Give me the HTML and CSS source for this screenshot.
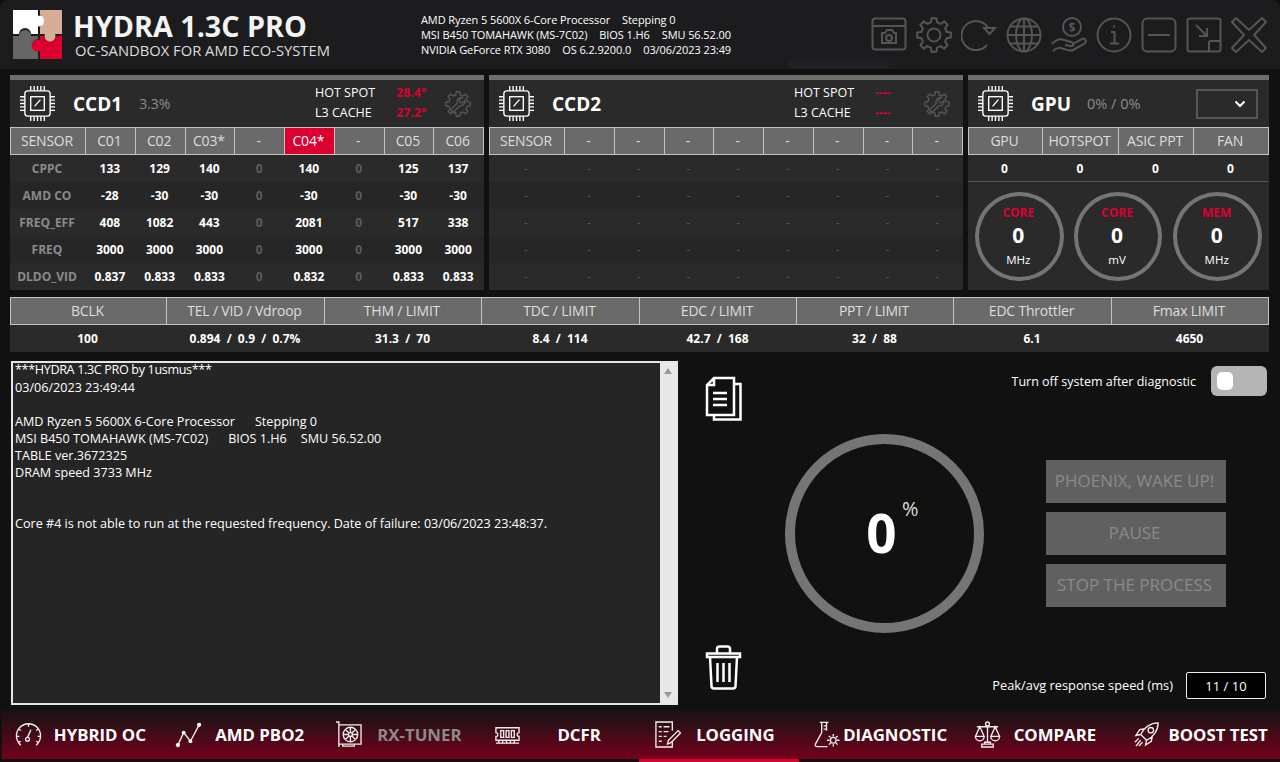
FILE: index.html
```html
<!DOCTYPE html>
<html lang="en">
<head>
  <meta charset="UTF-8">
  <meta name="viewport" content="width=device-width, initial-scale=1">
  <title>Hydra 1.3C Pro</title>
  <link rel="stylesheet" href="styles.css">
</head>
<body>

  <svg class="defs" width="0" height="0" aria-hidden="true">
    <symbol id="chip" viewBox="0 0 36 36">
      <path d="M11 0v5M14.500 0v5M18 0v5M21.500 0v5M25 0v5M11 31v5M14.500 31v5M18 31v5M21.500 31v5M25 31v5M0 11h5M0 14.500h5M0 18h5M0 21.500h5M0 25h5M31 11h5M31 14.500h5M31 18h5M31 21.500h5M31 25h5"/>
      <rect x="5" y="5" width="26" height="26" rx="3"/>
      <rect x="11" y="11" width="14" height="14"/>
      <path d="M15 21l6-7"/>
    </symbol>
    <symbol id="gear" viewBox="0 0 36 36">
      <polygon points="14.85,5.39 15.63,1.17 20.37,1.17 21.15,5.39 24.7,6.86 28.23,4.42 31.58,7.77 29.14,11.3 30.61,14.85 34.83,15.63 34.83,20.37 30.61,21.15 29.14,24.7 31.58,28.23 28.23,31.58 24.7,29.14 21.15,30.61 20.37,34.83 15.63,34.83 14.85,30.61 11.3,29.14 7.77,31.58 4.42,28.23 6.86,24.7 5.39,21.15 1.17,20.37 1.17,15.63 5.39,14.85 6.86,11.3 4.42,7.77 7.77,4.42 11.3,6.86"/>
    </symbol>
    <symbol id="tool" viewBox="0 0 36 36">
      <use href="#gear"/>
      <path d="M24 9a6 6 0 0 0-7 8L9 25a2.500 2.500 0 0 0 3.500 3.500l8-8a6 6 0 0 0 7-7l-4 3-3-1-1-3z"/>
    </symbol>
  </svg>

  <div class="app">

    <header class="top">
      <svg class="logo" width="49" height="49" viewBox="0 0 49 49">
        <path fill="#fff" d="M0 0H25V6A5.500 5.500 0 1 1 25 16V24H18A6 6 0 0 0 6 24H0Z"/>
        <path fill="#d8ad96" d="M27 0H49V24H42A5.500 5.500 0 1 1 32 24H27V17A6.500 6.500 0 0 0 27 5Z"/>
        <path fill="#666" d="M0 26H6A6 6 0 1 1 18 26H25V29A6 6 0 0 0 25 41V49H0Z"/>
        <path fill="#dc0030" d="M27 26H31A6 6 0 0 0 43 26H49V49H27V41A6 6 0 1 1 27 30Z"/>
      </svg>
      <div class="brand">
        <div class="brand-name">HYDRA 1.3C PRO</div>
        <div class="brand-sub">OC-SANDBOX FOR AMD ECO-SYSTEM</div>
      </div>
      <div class="sysinfo">
        <div>AMD Ryzen 5 5600X 6-Core Processor<span>Stepping 0</span></div>
        <div>MSI B450 TOMAHAWK (MS-7C02)<span>BIOS 1.H6</span><span>SMU 56.52.00</span></div>
        <div>NVIDIA GeForce RTX 3080<span>OS 6.2.9200.0</span><span>03/06/2023 23:49</span></div>
      </div>
      <div class="toolbar">
        <svg viewBox="0 0 36 36"><rect x="1.500" y="1.500" width="33" height="31" rx="3"/><path d="M1.500 9h33"/><path d="M11 16h3l2-3h5l2 3h2v10H11z"/><circle cx="18" cy="21" r="3"/></svg>
        <svg viewBox="0 0 36 36"><use href="#gear"/><circle cx="18" cy="18" r="6.500"/></svg>
        <svg viewBox="0 0 36 36"><path d="M27 10.500A14.500 14.500 0 1 0 26 28"/><path d="M23 11h11l-5.500 6z"/></svg>
        <svg viewBox="0 0 36 36"><circle cx="18" cy="18" r="16.500"/><ellipse cx="18" cy="18" rx="8" ry="16.500"/><path d="M18 1.500v33M1.500 18h33M4 9.500h28M4 26.500h28"/></svg>
        <svg viewBox="0 0 36 36"><circle cx="21" cy="10" r="9"/><text class="dollar" x="21" y="14.500">$</text><path d="M1 27c4-4 8-6 12-4l7 2c3 1 3 4 0 4l-6-1M22 27l9-5c4-2 5 3 2 5l-11 6c-4 2-8-1-12-2-3-1-6 1-8 3"/></svg>
        <svg viewBox="0 0 36 36"><circle cx="18" cy="18" r="16.500"/><path d="M15 15h3.500v11M14 26.500h9M17 9.500h2"/></svg>
        <svg viewBox="0 0 36 36"><rect x="1.500" y="1.500" width="33" height="33" rx="5"/><path d="M7 18h22"/></svg>
        <svg viewBox="0 0 36 36"><rect x="1.500" y="1.500" width="33" height="33" rx="2"/><path d="M10 8l11 11M21 11v8h-8M23 24h11M23 24v10"/></svg>
        <svg viewBox="0 0 36 36"><polygon points="5,1 18,13 31,1 35,5 23,18 35,31 31,35 18,23 5,35 1,31 13,18 1,5"/></svg>
      </div>
      <div class="ghost-btn"></div>
    </header>

    <section class="panels">

      <div class="panel">
        <div class="panel-head">
          <svg class="chip"><use href="#chip"/></svg>
          <div class="panel-name">CCD1</div>
          <div class="panel-load">3.3%</div>
          <div class="temps">
            <div>HOT SPOT</div><b class="hot">28.4°</b>
            <div>L3 CACHE</div><b class="hot">27.2°</b>
          </div>
          <svg class="tool"><use href="#tool"/></svg>
        </div>
        <div class="sheet">
          <div class="th">SENSOR</div><div class="th">C01</div><div class="th">C02</div><div class="th">C03*</div><div class="th">-</div><div class="th active">C04*</div><div class="th">-</div><div class="th">C05</div><div class="th">C06</div>
          <div class="td label">CPPC</div><div class="td">133</div><div class="td">129</div><div class="td">140</div><div class="td off">0</div><div class="td">140</div><div class="td off">0</div><div class="td">125</div><div class="td">137</div>
          <div class="td alt label">AMD CO</div><div class="td alt">-28</div><div class="td alt">-30</div><div class="td alt">-30</div><div class="td alt off">0</div><div class="td alt">-30</div><div class="td alt off">0</div><div class="td alt">-30</div><div class="td alt">-30</div>
          <div class="td label">FREQ_EFF</div><div class="td">408</div><div class="td">1082</div><div class="td">443</div><div class="td off">0</div><div class="td">2081</div><div class="td off">0</div><div class="td">517</div><div class="td">338</div>
          <div class="td alt label">FREQ</div><div class="td alt">3000</div><div class="td alt">3000</div><div class="td alt">3000</div><div class="td alt off">0</div><div class="td alt">3000</div><div class="td alt off">0</div><div class="td alt">3000</div><div class="td alt">3000</div>
          <div class="td label">DLDO_VID</div><div class="td">0.837</div><div class="td">0.833</div><div class="td">0.833</div><div class="td off">0</div><div class="td">0.832</div><div class="td off">0</div><div class="td">0.833</div><div class="td">0.833</div>
        </div>
      </div>

      <div class="panel">
        <div class="panel-head">
          <svg class="chip"><use href="#chip"/></svg>
          <div class="panel-name">CCD2</div>
          <div class="panel-load"></div>
          <div class="temps">
            <div>HOT SPOT</div><b class="hot">----</b>
            <div>L3 CACHE</div><b class="hot">----</b>
          </div>
          <svg class="tool"><use href="#tool"/></svg>
        </div>
        <div class="sheet">
          <div class="th">SENSOR</div><div class="th">-</div><div class="th">-</div><div class="th">-</div><div class="th">-</div><div class="th">-</div><div class="th">-</div><div class="th">-</div><div class="th">-</div>
          <div class="td blank">-</div><div class="td blank">-</div><div class="td blank">-</div><div class="td blank">-</div><div class="td blank">-</div><div class="td blank">-</div><div class="td blank">-</div><div class="td blank">-</div><div class="td blank">-</div>
          <div class="td alt blank">-</div><div class="td alt blank">-</div><div class="td alt blank">-</div><div class="td alt blank">-</div><div class="td alt blank">-</div><div class="td alt blank">-</div><div class="td alt blank">-</div><div class="td alt blank">-</div><div class="td alt blank">-</div>
          <div class="td blank">-</div><div class="td blank">-</div><div class="td blank">-</div><div class="td blank">-</div><div class="td blank">-</div><div class="td blank">-</div><div class="td blank">-</div><div class="td blank">-</div><div class="td blank">-</div>
          <div class="td alt blank">-</div><div class="td alt blank">-</div><div class="td alt blank">-</div><div class="td alt blank">-</div><div class="td alt blank">-</div><div class="td alt blank">-</div><div class="td alt blank">-</div><div class="td alt blank">-</div><div class="td alt blank">-</div>
          <div class="td blank">-</div><div class="td blank">-</div><div class="td blank">-</div><div class="td blank">-</div><div class="td blank">-</div><div class="td blank">-</div><div class="td blank">-</div><div class="td blank">-</div><div class="td blank">-</div>
        </div>
      </div>

      <div class="panel">
        <div class="panel-head">
          <svg class="chip"><use href="#chip"/></svg>
          <div class="panel-name">GPU</div>
          <div class="panel-load gpu-load">0% / 0%</div>
          <div class="gpu-select">
            <svg width="12" height="8" viewBox="0 0 12 8"><path d="M1.500 1.500L6 6l4.500-4.500"/></svg>
          </div>
        </div>
        <div class="sheet gpu-sheet">
          <div class="th">GPU</div><div class="th">HOTSPOT</div><div class="th">ASIC PPT</div><div class="th">FAN</div>
          <div class="td line">0</div><div class="td line">0</div><div class="td line">0</div><div class="td line">0</div>
        </div>
        <div class="rings">
          <div class="ring"><b>CORE</b><strong>0</strong><span>MHz</span></div>
          <div class="ring"><b>CORE</b><strong>0</strong><span>mV</span></div>
          <div class="ring"><b>MEM</b><strong>0</strong><span>MHz</span></div>
        </div>
      </div>

    </section>

    <section class="stats">
      <div class="th">BCLK</div><div class="th">TEL / VID / Vdroop</div><div class="th">THM / LIMIT</div><div class="th">TDC / LIMIT</div><div class="th">EDC / LIMIT</div><div class="th">PPT / LIMIT</div><div class="th">EDC Throttler</div><div class="th">Fmax LIMIT</div>
      <div class="td">100</div><div class="td">0.894 &nbsp;/&nbsp; 0.9 &nbsp;/&nbsp; 0.7%</div><div class="td">31.3 &nbsp;/&nbsp; 70</div><div class="td">8.4 &nbsp;/&nbsp; 114</div><div class="td">42.7 &nbsp;/&nbsp; 168</div><div class="td">32 &nbsp;/&nbsp; 88</div><div class="td">6.1</div><div class="td">4650</div>
    </section>

    <section class="work">
      <div class="log">
        <div class="log-text">
          <div class="log-title">***HYDRA 1.3C PRO by 1usmus***</div>
          <div>03/06/2023 23:49:44</div>
          <br>
          <div>AMD Ryzen 5 5600X 6-Core Processor<span>Stepping 0</span></div>
          <div>MSI B450 TOMAHAWK (MS-7C02)<span>BIOS 1.H6</span><span>SMU 56.52.00</span></div>
          <div>TABLE ver.3672325</div>
          <div>DRAM speed 3733 MHz</div>
          <br>
          <br>
          <div>Core #4 is not able to run at the requested frequency. Date of failure: 03/06/2023 23:48:37.</div>
        </div>
        <div class="scrollbar">
          <i class="arrow-up"></i>
          <i class="arrow-down"></i>
        </div>
      </div>

      <div class="tools">
        <svg width="37" height="45" viewBox="0 0 37 45"><path d="M9 2h20v37H2V9zM9 2v7H2M8 17h14M8 23h14M8 29h14"/><path d="M29 8h6.500v35.500H9V39"/></svg>
        <svg width="37" height="45" viewBox="0 0 37 45"><path d="M2 12V8.500h33V12zM12 8V4a2.500 2.500 0 0 1 2.500-2.500h8A2.500 2.500 0 0 1 25 4v4M5 12l1.500 29a2.500 2.500 0 0 0 2.500 2.500h19a2.500 2.500 0 0 0 2.500-2.500L32 12M12.500 18v19M18.500 18v19M24.500 18v19"/></svg>
      </div>

      <div class="dial">
        <strong>0</strong><span>%</span>
      </div>

      <div class="controls">
        <div class="control-row">
          <span>Turn off system after diagnostic</span>
          <div class="toggle"><i></i></div>
        </div>
        <div class="buttons">
          <button>PHOENIX, WAKE UP!</button>
          <button>PAUSE</button>
          <button>STOP THE PROCESS</button>
        </div>
        <div class="control-row speed-row">
          <span>Peak/avg response speed (ms)</span>
          <div class="speed">11 / 10</div>
        </div>
      </div>
    </section>

    <nav class="nav">
      <a class="nav-item">
        <svg viewBox="0 0 28 28"><path d="M6 25A12.500 12.500 0 1 1 22 25M14 3v3M4 8l2 2M24 8l-2 2M1.500 16h3M26.500 16h-3M4 22l2-1M24 22l-2-1M16.500 9L13 17"/><circle cx="13" cy="19" r="2"/></svg>
        <span>HYBRID OC</span>
      </a>
      <a class="nav-item">
        <svg viewBox="0 0 28 28"><path d="M3 25L9 12l7 9L25 4"/><circle class="dot" cx="3" cy="25" r="2.200"/><circle class="dot" cx="9" cy="12" r="2"/><circle class="dot" cx="16" cy="21" r="2"/><circle class="dot" cx="25" cy="4" r="2.200"/></svg>
        <span>AMD PBO2</span>
      </a>
      <a class="nav-item dim">
        <svg viewBox="0 0 28 28"><path d="M1 1h3v26M4 4h23v20H4M8 24v2h12v-2"/><circle cx="16" cy="14" r="7.500"/><circle cx="16" cy="14" r="2"/><path d="M16 7v5M16 16v5M9 14h5M18 14h5M11 9l3.500 3.500M17.500 15.500L21 19M21 9l-3.500 3.500M14.500 15.500L11 19"/></svg>
        <span>RX-TUNER</span>
      </a>
      <a class="nav-item">
        <svg viewBox="0 0 28 28"><path d="M2 7h24v5a2 2 0 0 0 0 4v4H2v-4a2 2 0 0 0 0-4zM2 23h24"/><path d="M7 10v7h3v-7zM12.500 10v7h3v-7zM18 10v7h3v-7zM5 20v3M9 20v3M13 20v3M17 20v3M21 20v3"/></svg>
        <span>DCFR</span>
      </a>
      <a class="nav-item current shifted">
        <svg viewBox="0 0 28 28"><path d="M19 10V1H2v26h17v-6M5 6h3M5 11h3M5 16h3M5 21h3M10 6h6M10 11h5M10 16h3"/><path d="M14 24l1-4 10-10 2.500 2.500-10 10z"/></svg>
        <span>LOGGING</span>
      </a>
      <a class="nav-item shifted">
        <svg viewBox="0 0 28 28"><path d="M6 1.500h9M8 2v10L1.500 24c-.5 1.500 0 2.500 2 2.500H14M13 2v8M10 5h3M10 8.500h3"/><circle cx="20" cy="20" r="3"/><path d="M20 13.500v2.500M20 24v2.500M13.500 20h2.500M24 20h2.500M15.500 15.500l1.700 1.700M22.800 22.800l1.700 1.700M24.500 15.500l-1.700 1.700M17.200 22.800l-1.700 1.700"/></svg>
        <span>DIAGNOSTIC</span>
      </a>
      <a class="nav-item shifted">
        <svg viewBox="0 0 28 28"><circle cx="14" cy="3" r="2"/><path d="M14 5v17M3 6h22M6 6L1.500 16h9zM22 6l-4.500 10h9zM1.500 16a4.500 4.500 0 0 0 9 0M17.500 16a4.500 4.500 0 0 0 9 0M11 22h6v2h-6zM8 24h12v3H8z"/></svg>
        <span>COMPARE</span>
      </a>
      <a class="nav-item">
        <svg viewBox="0 0 28 28"><path d="M8 14C11 7 18 2 26 2c0 8-5 15-12 18zM8 14l-5 1 4-6 5-1M14 20l-1 5 6-4 1-5"/><circle cx="18.500" cy="9.500" r="2.800"/><path d="M6 18l-4 4M8 20l-5 6M10 22l-4 4"/></svg>
        <span>BOOST TEST</span>
      </a>
    </nav>

  </div>

</body>
</html>
```

FILE: styles.css
```css
* {
  box-sizing: border-box;
}

body {
  margin: 0;
  background: #111;
  color: #fff;
  font-family: "Open Sans", "Noto Sans", sans-serif;
  font-stretch: 90%;
}

.defs {
  display: block;
  height: 0;
}

.app {
  width: 1280px;
  height: 762px;
  display: flex;
  flex-direction: column;
  overflow: hidden;
  background: #111;
}

/* Header */
.top {
  height: 69px;
  flex: none;
  display: flex;
  align-items: center;
  position: relative;
  padding: 0 13px;
  border-radius: 8px 8px 0 0;
  background: #1c1c1e;
}

.ghost-btn {
  position: absolute;
  left: 788px;
  top: 60px;
  width: 101px;
  height: 9px;
  background: #1d2126;
}

.logo {
  flex: none;
}

.brand {
  width: 348px;
  margin-left: 11px;
  flex: none;
}

.brand-name {
  font-size: 28.700px;
  font-weight: 700;
  line-height: 31px;
  color: #f4f4f4;
}

.brand-sub {
  margin-left: 2px;
  font-size: 14.750px;
  line-height: 18px;
  color: #ddd;
}

.sysinfo {
  font-size: 11px;
  letter-spacing: -0.09px;
  line-height: 15px;
  white-space: nowrap;
}

.sysinfo span {
  margin-left: 12px;
}

.toolbar {
  margin-left: auto;
  display: flex;
  gap: 9px;
}

.toolbar svg {
  width: 36px;
  height: 36px;
  fill: none;
  stroke: #555;
  stroke-width: 2;
}

.dollar {
  fill: #555;
  stroke: none;
  font-size: 12px;
  font-weight: 700;
  text-anchor: middle;
}

/* Panels */
.panels {
  height: 215px;
  flex: none;
  margin: 6px 11px 0 10px;
  display: grid;
  grid-template-columns: 474px 474px 301px;
  gap: 5px;
}

.panel {
  border-top: 5px solid #6e6e6e;
  background: #2a2a2a;
}

.panel-head {
  height: 47px;
  display: flex;
  align-items: center;
  padding-left: 10px;
}

.chip {
  width: 35px;
  height: 35px;
  flex: none;
  fill: none;
  stroke: #fff;
  stroke-width: 1.400;
}

.panel-name {
  margin-left: 18px;
  font-size: 19px;
  font-weight: 700;
}

.panel-load {
  margin-left: 17px;
  font-size: 14px;
  color: #8a8a8a;
}

.gpu-load {
  margin-left: 16px;
  font-size: 14.500px;
}

.temps {
  margin-left: auto;
  padding-bottom: 1px;
  display: grid;
  grid-template-columns: 82px 48px;
  font-size: 12.500px;
  line-height: 20px;
}

.temps b {
  margin-left: -1px;
}

.hot {
  color: #dc0030;
}

.tool {
  width: 26px;
  height: 26px;
  margin-right: 13px;
  fill: none;
  stroke: #555;
  stroke-width: 2;
}

.sheet {
  display: grid;
  grid-template-columns: 76px repeat(8, 1fr);
}

.gpu-sheet {
  grid-template-columns: 75px 76px 75px 75px;
}

.th {
  height: 28px;
  display: flex;
  align-items: center;
  justify-content: center;
  padding: 0 2px 1px 0;
  background: #6a6a6a;
  border: 1px solid #c4c4c4;
  border-left-width: 0;
  font-size: 14px;
  letter-spacing: -0.2px;
  color: #ddd;
  white-space: nowrap;
}

.th:first-child {
  border-left-width: 1px;
}

.th.active {
  background: #dc0030;
  color: #fff;
}

.td {
  height: 27px;
  display: flex;
  align-items: center;
  justify-content: center;
  padding-right: 2px;
  background: #2a2a2a;
  font-size: 12px;
  font-weight: 700;
  white-space: nowrap;
}

.td.alt {
  background: #262626;
}

.td.label {
  color: #8a8a8a;
}

.td.off {
  color: #5c5c5c;
}

.td.blank {
  color: #555;
  font-weight: 400;
}

.td.line {
  border-bottom: 1px solid #555;
}

/* GPU */
.gpu-select {
  width: 62px;
  height: 30px;
  margin-left: auto;
  margin-right: 11px;
  display: flex;
  align-items: center;
  justify-content: flex-end;
  padding-right: 10px;
  border: 2px solid #555;
}

.gpu-select svg {
  fill: none;
  stroke: #fff;
  stroke-width: 2;
}

.rings {
  display: flex;
  gap: 10px;
  padding: 10px 7px 0;
}

.ring {
  width: 89px;
  height: 89px;
  display: flex;
  flex-direction: column;
  align-items: center;
  border: 4px solid #757575;
  border-radius: 50%;
  padding-top: 8px;
  padding-right: 2px;
}

.ring:last-child {
  margin-left: 1px;
}

.ring b {
  font-size: 12px;
  line-height: 17px;
  color: #dc0030;
}

.ring strong {
  font-size: 21px;
  line-height: 28px;
}

.ring span {
  margin-top: 3px;
  font-size: 11.500px;
  line-height: 16px;
}

/* Strip under the panels */
.stats {
  margin: 7px 11px 0 10px;
  flex: none;
  display: grid;
  grid-template-columns: 157px 158px 157px 158px 157px 157px 158px 157px;
}

/* Lower part */
.work {
  height: 344px;
  margin-top: 9px;
  flex: none;
  display: flex;
}

.log {
  width: 667px;
  margin-left: 11px;
  flex: none;
  display: flex;
  border: 2px solid #e6e6e6;
  background: #252525;
}

.log-text {
  flex: 1;
  margin-top: -2px;
  padding: 0 2px;
  font-size: 12.600px;
  line-height: 17px;
}

.log-title {
  line-height: 18px;
  letter-spacing: -0.35px;
}

.log-text span {
  margin-left: 20px;
}

.log-text span + span {
  margin-left: 14px;
}

.scrollbar {
  width: 16px;
  display: flex;
  flex-direction: column;
  justify-content: space-between;
  align-items: center;
  padding: 5px 0;
  background: #e8e8e8;
}

.arrow-up {
  border: 4px solid transparent;
  border-top-width: 0;
  border-bottom: 6px solid #999;
}

.arrow-down {
  border: 4px solid transparent;
  border-bottom-width: 0;
  border-top: 6px solid #999;
}

.tools {
  width: 37px;
  margin-left: 27px;
  flex: none;
  display: flex;
  flex-direction: column;
  justify-content: space-between;
  padding: 15px 0;
}

.tools svg {
  fill: none;
  stroke: #fff;
  stroke-width: 2.500;
}

.dial {
  width: 199px;
  height: 199px;
  margin-left: 43px;
  align-self: center;
  flex: none;
  display: flex;
  align-items: center;
  justify-content: center;
  padding-right: 6px;
  position: relative;
  border: 10px solid #757575;
  border-radius: 50%;
}

.dial strong {
  font-size: 53px;
  line-height: 60px;
}

.dial span {
  position: absolute;
  left: 107px;
  top: 51px;
  font-size: 20px;
  color: #ddd;
}

.controls {
  flex: 1;
  display: flex;
  flex-direction: column;
  justify-content: space-between;
  padding: 5px 13px 6px 0;
}

.control-row {
  display: flex;
  align-items: center;
  justify-content: flex-end;
  font-size: 12.500px;
}

.toggle {
  width: 56px;
  height: 30px;
  margin-left: 15px;
  display: flex;
  align-items: center;
  padding-left: 6px;
  border-radius: 6px;
  background: #b5b5b5;
}

.toggle i {
  width: 16px;
  height: 18px;
  border-radius: 5px;
  background: #fff;
}

.buttons {
  margin-top: -1px;
  margin-left: 62px;
  display: flex;
  flex-direction: column;
  gap: 9px;
}

.buttons button {
  width: 180px;
  height: 43px;
  padding: 0 3px 2px 0;
  border: 0;
  background: #606060;
  color: #8a8a8a;
  font-family: inherit;
  font-stretch: inherit;
  font-size: 17px;
}

.speed-row {
  margin-right: 1px;
  font-size: 12.800px;
}

.speed-row span {
  margin-top: -2px;
}

.speed {
  width: 80px;
  height: 27px;
  margin-left: 13px;
  display: flex;
  align-items: center;
  justify-content: center;
  border: 1px solid #eee;
  border-radius: 2px;
  background: #000;
  font-size: 13px;
}

/* Bottom navigation */
.nav {
  width: 1280px;
  height: 52px;
  margin-top: 5px;
  flex: none;
  display: flex;
  background: linear-gradient(#141414, #75001c) 2px 0 / calc(100% - 2px) 49px no-repeat;
}

.nav-item {
  width: 159.750px;
  flex: none;
  display: flex;
  align-items: center;
  padding: 0 2px 1px 15px;
  font-size: 16.800px;
  font-weight: 700;
  border-bottom: 3px solid transparent;
}

.nav-item.shifted {
  padding-right: 9px;
}

.nav-item svg {
  width: 27px;
  height: 27px;
  flex: none;
  fill: none;
  stroke: #eee;
  stroke-width: 1.400;
}

.nav-item span {
  flex: 1;
  text-align: center;
  white-space: nowrap;
}

.nav-item .dot {
  fill: #fff;
  stroke: none;
}

.nav-item.dim span {
  color: #8a8a8a;
}

.nav-item.current {
  border-bottom-color: #dc0030;
}
```
